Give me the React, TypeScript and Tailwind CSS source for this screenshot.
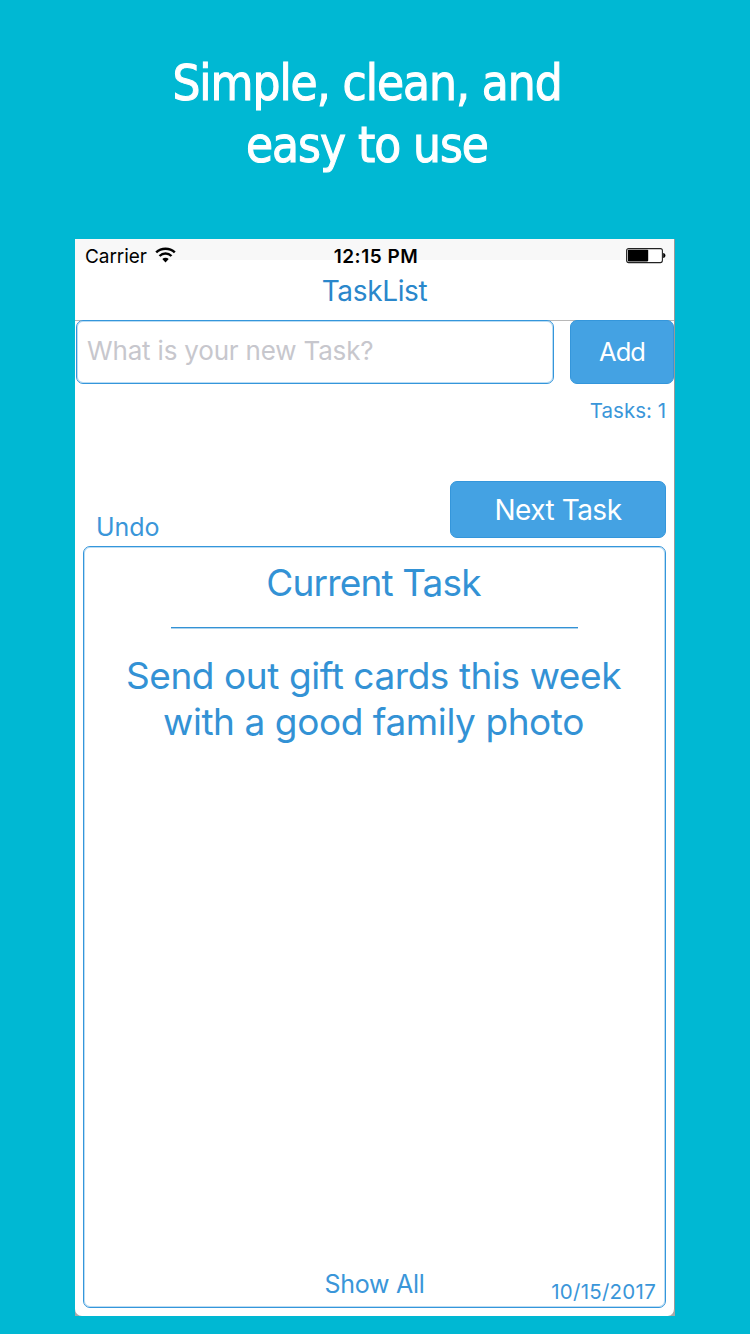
function WifiIcon() {
  return (
    <svg className="ml-[8px] mt-[7px] h-[16px] w-[21px]" viewBox="0 0 21 16" fill="none" stroke="#000">
      <path d="M1.2 5.3C6.4 0.4 14.6 0.4 19.8 5.3" strokeWidth="2.5" />
      <path d="M4.5 9C8 5.7 13 5.7 16.5 9" strokeWidth="2.4" />
      <path d="M7.3 12C9.2 10.2 11.8 10.2 13.7 12L10.5 15.4Z" fill="#000" stroke="none" />
    </svg>
  );
}

function BatteryIcon() {
  return (
    <svg className="mt-[7px] h-[18px] w-[41px]" viewBox="0 0 41 18">
      <rect x="1.6" y="1.6" width="35.8" height="14" rx="2" fill="#fff" stroke="#222" strokeWidth="1.1" />
      <rect x="2.8" y="2.8" width="20.4" height="11.6" rx="0.8" fill="#000" />
      <path d="M38.2 6.1C41.2 6.6 41.2 10.6 38.2 11.1Z" fill="#000" />
    </svg>
  );
}

export default function App() {
  return (
    <main className="flex h-[1334px] w-[750px] flex-col overflow-hidden bg-[#00b8d3] font-[Inter,'Liberation_Sans',sans-serif]">
      <h1 className="mt-[53px] h-[186px] w-[734px] text-center font-['DejaVu_Sans_Condensed','DejaVu_Sans',sans-serif] text-[49px] leading-[62px] tracking-[-1.05px] whitespace-nowrap text-white [-webkit-text-stroke:1px_white]">
        Simple, clean, and
        <br />
        easy to use
      </h1>

      <div className="ml-[75px] h-[1077px] w-[600px] bg-[#a8a8a8]">
        <section className="flex h-full flex-col rounded-b-[7px] border-r border-[#9a9a9a] bg-white">
          <header className="h-[82px] shrink-0 border-b border-[#b8b8b8] bg-[linear-gradient(#f8f8f8_21px,#fff_21px)]">
            <div className="grid h-[38px] grid-cols-[200px_200px_199px] pt-px text-[19px] leading-[34px] text-black">
              <div className="flex pl-[10px]">
                <span className="tracking-[-0.05px]">Carrier</span>
                <WifiIcon />
              </div>
              <span className="pl-[2px] text-center font-semibold tracking-[0.5px]">12:15 PM</span>
              <div className="flex justify-end pr-[8px]">
                <BatteryIcon />
              </div>
            </div>
            <div className="text-center text-[28px] leading-[28px] tracking-[-0.35px] text-[#2a87cb]">TaskList</div>
          </header>

          <div className="-mt-px flex h-[64px] shrink-0 justify-between pl-px">
            <div className="w-[478px] rounded-[7px] border border-[#3496db] bg-white pl-[10px] text-[26px] leading-[60px] tracking-[-0.18px] text-[#c7c7cd] shadow-[inset_0_0_0_1px_#3496db55]">
              What is your new Task?
            </div>
            <button className="w-[104px] rounded-[7px] border border-[#3496db] bg-[#44a2e3] text-[25.5px] leading-[62px] tracking-[-0.9px] text-white">
              Add
            </button>
          </div>

          <div className="h-[97px] shrink-0 pr-[8px] text-right text-[20.5px] leading-[53px] text-[#3a96d9]">Tasks: 1</div>

          <div className="flex h-[57px] shrink-0 items-start justify-between pr-[8px] pl-[21px]">
            <span className="pt-[31px] text-[25px] leading-[30px] tracking-[-0.1px] text-[#3a96d9]">Undo</span>
            <button className="h-[57px] w-[216px] rounded-[7px] border border-[#3496db] bg-[#44a2e3] pt-px text-[28px] leading-[55px] tracking-[-0.5px] text-white">
              Next Task
            </button>
          </div>

          <article className="mt-[8px] ml-[8px] flex h-[762px] w-[583px] shrink-0 flex-col items-center rounded-[7px] border border-[#3496db] text-[#3392d5] shadow-[inset_0_0_0_1px_#3496db55]">
            <h2 className="h-[80px] pr-[2px] text-[37px] leading-[72px] tracking-[-0.85px]">Current Task</h2>
            <div className="h-[2px] w-[407px] border-t border-[#3392d5] bg-[#3392d566]" />
            <p className="mt-[24px] pr-[2px] text-center text-[37px] leading-[46px] tracking-[-0.43px] whitespace-nowrap">
              Send out gift cards this week
              <br />
              with a good family photo
            </p>
            <footer className="mt-auto grid h-[43px] w-full grid-cols-[1fr_120px_1fr] text-[#3a96d9]">
              <span />
              <span className="text-center text-[25px] leading-[40px] tracking-[-0.3px]">Show All</span>
              <span className="pr-[9px] text-right text-[20.5px] leading-[56px] tracking-[0.25px]">10/15/2017</span>
            </footer>
          </article>
        </section>
      </div>
    </main>
  );
}
